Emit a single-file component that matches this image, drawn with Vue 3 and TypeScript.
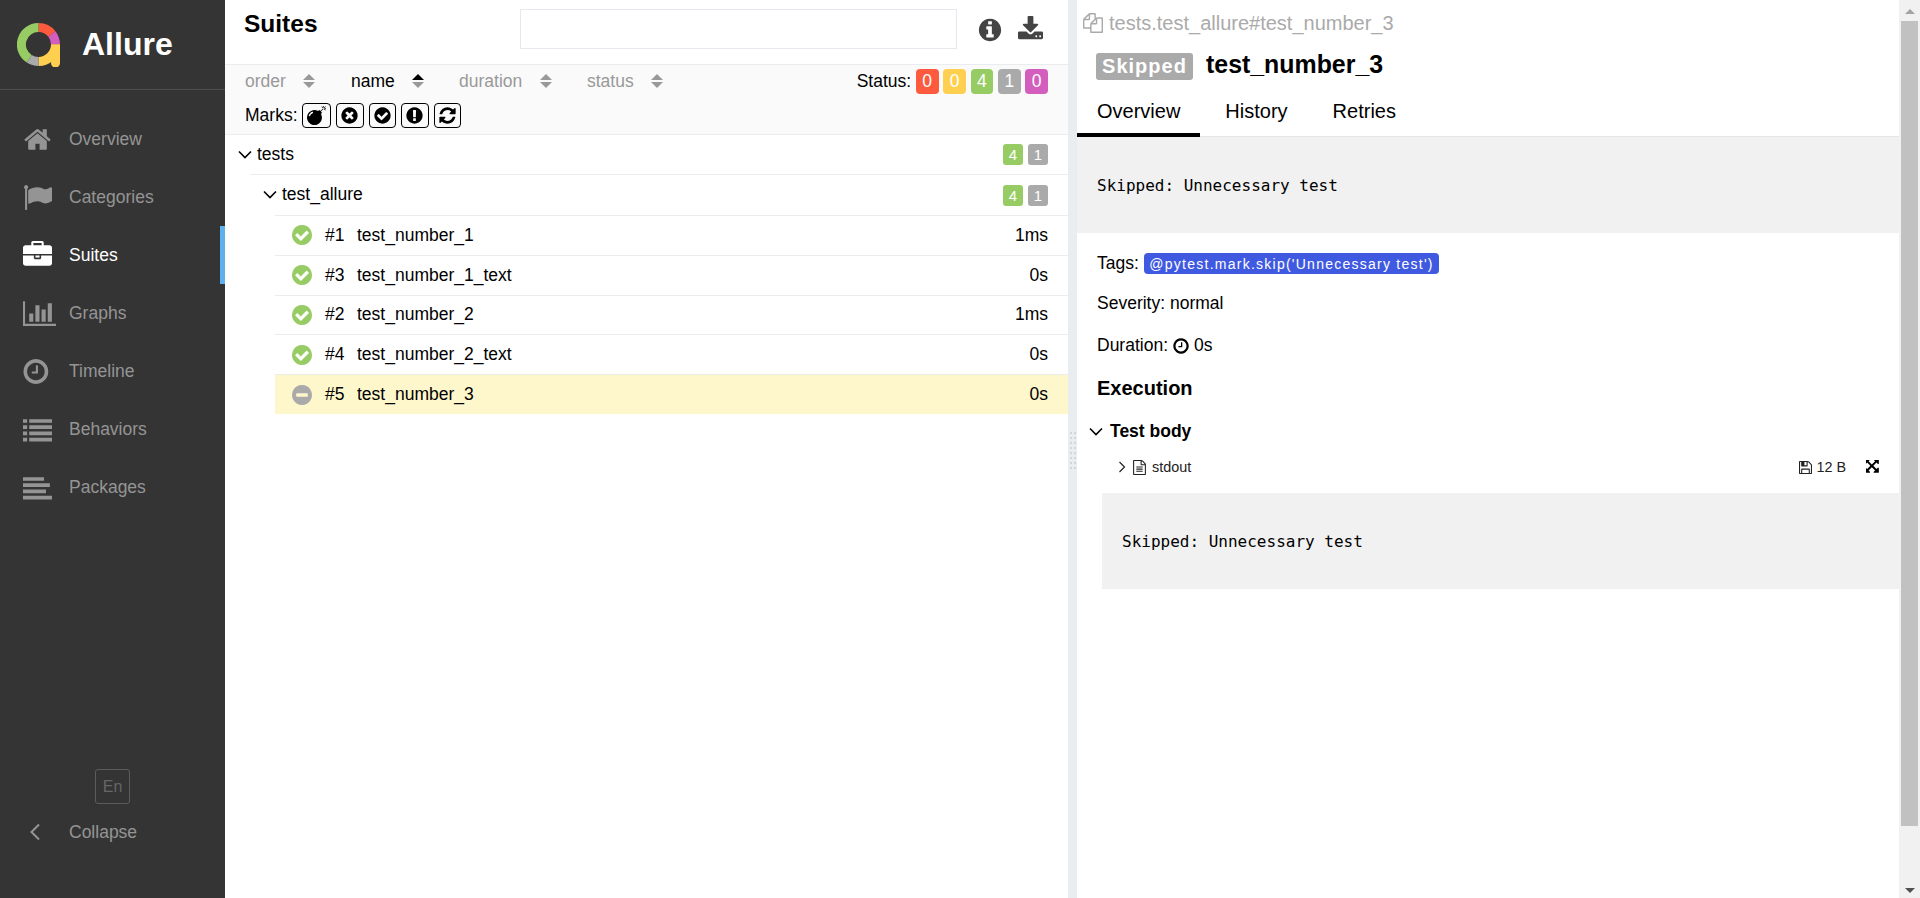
<script setup lang="ts">
// font awesome 4 paths, 1792 grid unless noted
const icons: Record<string, string> = {
  home: "M1472 992v480q0 26-19 45t-45 19h-384v-384h-256v384h-384q-26 0-45-19t-19-45v-480q0-1 .5-3t.5-3l575-474 575 474q1 2 1 6zm223-69l-62 74q-8 9-21 11h-3q-13 0-21-7l-692-577-692 577q-12 8-24 7-13-2-21-11l-62-74q-8-10-7-23.500t11-21.500l719-599q32-26 76-26t76 26l244 204v-195q0-14 9-23t23-9h192q14 0 23 9t9 23v408l219 182q10 8 11 21.500t-7 23.500z",
  flag: "M320 256q0 72-64 110v1266q0 13-9.500 22.500t-22.500 9.500h-64q-13 0-22.500-9.500t-9.500-22.500v-1266q-64-38-64-110 0-53 37.500-90.500t90.500-37.500 90.500 37.500 37.500 90.500zm1472 64v763q0 25-12.500 38.500t-39.500 27.500q-215 116-369 116-61 0-123.500-22t-108.500-48-115.500-48-142.500-22q-192 0-464 146-17 9-33 9-26 0-45-19t-19-45v-742q0-32 31-55 21-14 79-43 236-120 421-120 107 0 200 29t219 88q38 19 88 19 54 0 117.500-21t110-47 88-47 54.500-21q26 0 45 19t19 45z",
  briefcase:
    "M640 256h512v-128h-512v128zm1152 640v480q0 66-47 113t-113 47h-1472q-66 0-113-47t-47-113v-480h672v160q0 26 19 45t45 19h320q26 0 45-19t19-45v-160h672zm-768 0v128h-256v-128h256zm768-480v384h-1792v-384q0-66 47-113t113-47h352v-160q0-40 28-68t68-28h576q40 0 68 28t28 68v160h352q66 0 113 47t47 113z",
  chart:
    "M640 896v512h-256v-512h256zm384-512v1024h-256v-1024h256zm1024 1152v128h-2048v-1536h128v1408h1920zm-640-896v768h-256v-768h256zm384-384v1152h-256v-1152h256z",
  clock:
    "M1024 544v448q0 14-9 23t-23 9h-320q-14 0-23-9t-9-23v-64q0-14 9-23t23-9h224v-352q0-14 9-23t23-9h64q14 0 23 9t9 23zm416 352q0-148-73-273t-198-198-273-73-273 73-198 198-73 273 73 273 198 198 273 73 273-73 198-198 73-273zm224 0q0 209-103 385.500t-279.500 279.500-385.500 103-385.500-103-279.500-279.500-103-385.500 103-385.500 279.500-279.500 385.500-103 385.500 103 279.500 279.500 103 385.500z",
  list: "M0 256h256v230h-256zM0 640h256v230h-256zM0 1024h256v230h-256zM0 1408h256v230h-256zM384 256h1408v230h-1408zM384 640h1408v230h-1408zM384 1024h1408v230h-1408zM384 1408h1408v230h-1408z",
  align:
    "M0 256h1300v230h-1300zM0 640h1660v230h-1660zM0 1024h1420v230h-1420zM0 1408h1792v230h-1792z",
  check:
    "M1412 734q0-28-18-46l-91-90q-19-19-45-19t-45 19l-408 407-226-226q-19-19-45-19t-45 19l-91 90q-18 18-18 46 0 27 18 45l362 362q19 19 45 19 27 0 46-19l543-543q18-18 18-45zm252 162q0 209-103 385.500t-279.500 279.500-385.500 103-385.500-103-279.500-279.500-103-385.500 103-385.500 279.500-279.500 385.500-103 385.500 103 279.500 279.500 103 385.500z",
  minus:
    "M1344 960v-128q0-26-19-45t-45-19h-768q-26 0-45 19t-19 45v128q0 26 19 45t45 19h768q26 0 45-19t19-45zm320-64q0 209-103 385.500t-279.500 279.500-385.500 103-385.500-103-279.500-279.500-103-385.500 103-385.500 279.500-279.500 385.500-103 385.500 103 279.500 279.500 103 385.500z",
  times:
    "M1277 1122q0-26-19-45l-181-181 181-181q19-19 19-45 0-27-19-46l-90-90q-19-19-46-19-26 0-45 19l-181 181-181-181q-19-19-45-19-27 0-46 19l-90 90q-19 19-19 46 0 26 19 45l181 181-181 181q-19 19-19 45 0 27 19 46l90 90q19 19 46 19 26 0 45-19l181-181 181 181q19 19 45 19 27 0 46-19l90-90q19-19 19-46zm387-226q0 209-103 385.500t-279.500 279.500-385.500 103-385.500-103-279.500-279.500-103-385.500 103-385.500 279.500-279.500 385.500-103 385.500 103 279.500 279.500 103 385.500z",
  exclamation:
    "M896 128q209 0 385.500 103t279.500 279.500 103 385.500-103 385.500-279.500 279.500-385.500 103-385.500-103-279.500-279.500-103-385.500 103-385.500 279.500-279.500 385.500-103zm128 1247v-190q0-14-9-23.500t-22-9.500h-192q-13 0-23 10t-10 23v190q0 13 10 23t23 10h192q13 0 22-9.500t9-23.500zm-2-344l18-621q0-12-10-18-10-8-24-8h-220q-14 0-24 8-10 6-10 18l17 621q0 10 10 17.500t24 7.500h185q14 0 23.500-7.500t10.500-17.500z",
  refresh:
    "M1639 1056q0 5-1 7-64 268-268 434.500t-478 166.500q-146 0-282.500-55t-243.500-157l-129 129q-19 19-45 19t-45-19-19-45v-448q0-26 19-45t45-19h448q26 0 45 19t19 45-19 45l-137 137q71 66 161 102t187 36q134 0 250-65t186-179q11-17 53-117 8-23 30-23h192q13 0 22.500 9.500t9.500 22.500zm25-800v448q0 26-19 45t-45 19h-448q-26 0-45-19t-19-45 19-45l138-138q-148-137-349-137-134 0-250 65t-186 179q-11 17-53 117-8 23-30 23h-199q-13 0-22.500-9.500t-9.500-22.500v-7q65-268 270-434.500t480-166.500q146 0 284 55.500t245 156.500l130-129q19-19 45-19t45 19 19 45z",
  bomb: "M571 589q-10-25-34-35t-49 0q-108 44-191 127t-127 191q-10 25 0 49t35 34q13 5 24 5 42 0 60-40 34-84 98.500-148.500t148.500-98.500q25-11 35-35t0-49zm942-356l46 46-244 243 68 68q19 19 19 45.500t-19 45.500l-64 64q89 161 89 343 0 143-55.500 273.500t-150 225-225 150-273.500 55.500-273.500-55.500-225-150-150-225-55.500-273.500 55.500-273.500 150-225 225-150 273.500-55.500q182 0 343 89l64-64q19-19 45.500-19t45.500 19l68 68zm8-56q-10 10-22 10-13 0-23-10l-91-90q-9-10-9-23t9-23q10-9 23-9t23 9l90 91q10 9 10 22.500t-10 22.500zm230 230q-11 9-23 9t-23-9l-90-91q-10-9-10-22.500t10-22.500q9-10 22.500-10t22.500 10l91 90q9 10 9 23t-9 23zm41-183q0 14-9 23t-23 9h-96q-14 0-23-9t-9-23 9-23 23-9h96q14 0 23 9t9 23zm-192-192v96q0 14-9 23t-23 9-23-9-9-23v-96q0-14 9-23t23-9 23 9 9 23zm151 55l-91 90q-10 10-22 10-13 0-23-10-10-9-10-22.500t10-22.500l90-91q10-9 23-9t23 9q9 10 9 23t-9 23z",
  info: "M1152 1376v-160q0-14-9-23t-23-9h-96v-512q0-14-9-23t-23-9h-320q-14 0-23 9t-9 23v160q0 14 9 23t23 9h96v320h-96q-14 0-23 9t-9 23v160q0 14 9 23t23 9h448q14 0 23-9t9-23zm-128-896v-160q0-14-9-23t-23-9h-192q-14 0-23 9t-9 23v160q0 14 9 23t23 9h192q14 0 23-9t9-23zm640 416q0 209-103 385.500t-279.500 279.500-385.500 103-385.500-103-279.500-279.500-103-385.500 103-385.500 279.500-279.500 385.500-103 385.500 103 279.500 279.500 103 385.500z",
  download:
    "M1344 1344q0-26-19-45t-45-19-45 19-19 45 19 45 45 19 45-19 19-45zm256 0q0-26-19-45t-45-19-45 19-19 45 19 45 45 19 45-19 19-45zm128-224v320q0 40-28 68t-68 28h-1472q-40 0-68-28t-28-68v-320q0-40 28-68t68-28h465l135 136q58 56 136 56t136-56l136-136h464q40 0 68 28t28 68zm-325-569q17 41-14 70l-448 448q-18 19-45 19t-45-19l-448-448q-31-29-14-70 17-39 59-39h256v-448q0-26 19-45t45-19h256q26 0 45 19t19 45v448h256q42 0 59 39z",
  files:
    "M1696 384q40 0 68 28t28 68v1216q0 40-28 68t-68 28h-960q-40 0-68-28t-28-68v-288h-544q-40 0-68-28t-28-68v-672q0-40 20-88t48-76l408-408q28-28 76-48t88-20h416q40 0 68 28t28 68v328q68-40 128-40h416zm-544 213l-299 299h299v-299zm-640-384l-299 299h299v-299zm196 647l316-316v-416h-384v416q0 40-28 68t-68 28h-416v640h512v-256q0-40 20-88t48-76zm956 804v-1152h-384v416q0 40-28 68t-68 28h-416v640h896z",
  file: "M1596 380q28 28 48 76t20 88v1152q0 40-28 68t-68 28h-1344q-40 0-68-28t-28-68v-1600q0-40 28-68t68-28h896q40 0 88 20t76 48zm-444-244v376h376q-10-29-22-41l-313-313q-12-12-41-22zm384 1528v-1024h-416q-40 0-68-28t-28-68v-416h-768v1536h1280zm-1024-864q0-14 9-23t23-9h704q14 0 23 9t9 23v64q0 14-9 23t-23 9h-704q-14 0-23-9t-9-23v-64zm736 224q14 0 23 9t9 23v64q0 14-9 23t-23 9h-704q-14 0-23-9t-9-23v-64q0-14 9-23t23-9h704zm0 256q14 0 23 9t9 23v64q0 14-9 23t-23 9h-704q-14 0-23-9t-9-23v-64q0-14 9-23t23-9h704z",
  floppy:
    "M512 1536h768v-384h-768v384zm896 0h128v-896q0-14-10-38.500t-20-34.500l-281-281q-10-10-34-20t-39-10v416q0 40-28 68t-68 28h-576q-40 0-68-28t-28-68v-416h-128v1280h128v-416q0-40 28-68t68-28h832q40 0 68 28t28 68v416zm-384-928v-320q0-13-9.500-22.500t-22.500-9.500h-192q-13 0-22.500 9.500t-9.500 22.500v320q0 13 9.500 22.500t22.500 9.500h192q13 0 22.500-9.500t9.500-22.500zm640 32v928q0 40-28 68t-68 28h-1344q-40 0-68-28t-28-68v-1344q0-40 28-68t68-28h928q40 0 88 20t76 48l280 280q28 28 48 76t20 88z",
  expand:
    "M1283 413l-355 355 355 355 144-144q29-31 70-14 39 17 39 59v448q0 26-19 45t-45 19h-448q-42 0-59-40-17-39 14-69l144-144-355-355-355 355 144 144q31 30 14 69-17 40-59 40h-448q-26 0-45-19t-19-45v-448q0-42 40-59 39-17 69 14l144 144 355-355-355-355-144 144q-19 19-45 19-12 0-24-5-40-17-40-59v-448q0-26 19-45t45-19h448q42 0 59 40 17 39-14 69l-144 144 355 355 355-355-144-144q-31-30-14-69 17-40 59-40h448q26 0 45 19t19 45v448q0 42-39 59-13 5-25 5-26 0-45-19z",
};

const navItems = [
  { label: "Overview", icon: "home", box: "0 0 1792 1792" },
  { label: "Categories", icon: "flag", box: "0 0 1792 1792" },
  { label: "Suites", icon: "briefcase", box: "0 0 1792 1792", active: true },
  { label: "Graphs", icon: "chart", box: "0 0 2048 1792" },
  { label: "Timeline", icon: "clock", box: "100 0 1792 1792" },
  { label: "Behaviors", icon: "list", box: "0 0 1792 1792" },
  { label: "Packages", icon: "align", box: "0 0 1792 1792" },
];

const sorters = [
  { label: "order", width: 106 },
  { label: "name", width: 108, active: true },
  { label: "duration", width: 128 },
  { label: "status", width: 80 },
];

const marks = ["bomb", "times", "check", "exclamation", "refresh"];

const statusCounts = [
  { value: 0, color: "#fd5a3e" },
  { value: 0, color: "#ffd050" },
  { value: 4, color: "#97cc64" },
  { value: 1, color: "#aaaaaa" },
  { value: 0, color: "#d35ebe" },
];

const tests = [
  { order: 1, name: "test_number_1", time: "1ms", icon: "check" },
  { order: 3, name: "test_number_1_text", time: "0s", icon: "check" },
  { order: 2, name: "test_number_2", time: "1ms", icon: "check" },
  { order: 4, name: "test_number_2_text", time: "0s", icon: "check" },
  { order: 5, name: "test_number_3", time: "0s", icon: "minus", selected: true },
];

const tabs = ["Overview", "History", "Retries"];
const message = "Skipped: Unnecessary test";
const handleDots = 16;
</script>

<template>
  <div class="app">
    <aside class="side">
      <div class="brand">
        <svg class="logo" viewBox="0 0 44 44" width="44" height="44">
          <g fill="none" stroke-width="9">
            <path d="M21.5 4.5A17 17 0 0 1 34.900 11" stroke="#fd5a3e" />
            <path d="M34.900 11A17 17 0 0 1 38.500 21.500" stroke="#d35ebe" />
            <path d="M38.500 21.500A17 17 0 0 1 21.500 38.500" stroke="#ffd050" />
            <path d="M21.500 38.500A17 17 0 0 1 12.200 35.800" stroke="#aaaaaa" />
            <path d="M12.200 35.800A17 17 0 0 1 21.500 4.500" stroke="#97cc64" />
          </g>
          <path d="M34 21.500h9v18.500a4.500 4.500 0 0 1-9 0z" fill="#ffd050" />
        </svg>
        <span class="brand-name">Allure</span>
      </div>
      <nav class="nav">
        <a
          v-for="item in navItems"
          :key="item.label"
          class="nav-item"
          :class="{ active: item.active }"
        >
          <span class="nav-icon">
            <svg :viewBox="item.box" height="29" :width="item.icon === 'chart' ? 33 : 29">
              <path :d="icons[item.icon]" fill="currentColor" />
            </svg>
          </span>
          <span>{{ item.label }}</span>
        </a>
      </nav>
      <div class="side-foot">
        <div class="lang">En</div>
        <a class="collapse">
          <span class="nav-icon">
            <svg width="12" height="18" viewBox="0 0 12 18" class="collapse-arrow">
              <path d="M10 1.500L2.500 9l7.500 7.500" fill="none" stroke="currentColor" stroke-width="2" />
            </svg>
          </span>
          <span>Collapse</span>
        </a>
      </div>
    </aside>

    <main class="tree-pane">
      <header class="tree-head">
        <h2>Suites</h2>
        <input class="search" type="text" />
        <svg class="head-icon info" viewBox="0 0 1792 1792" width="26" height="26">
          <path :d="icons.info" fill="currentColor" />
        </svg>
        <svg class="head-icon" viewBox="0 0 1792 1792" width="27" height="27">
          <path :d="icons.download" fill="currentColor" />
        </svg>
      </header>

      <div class="filters">
        <div class="filter-row">
          <div
            v-for="s in sorters"
            :key="s.label"
            class="sorter"
            :class="{ on: s.active }"
            :style="{ width: s.width + 'px' }"
          >
            <span class="sorter-name">{{ s.label }}</span>
            <span class="sort-arrows" :class="{ on: s.active }">
              <i class="up"></i>
              <i class="down"></i>
            </span>
          </div>
          <div class="status">
            <span>Status:</span>
            <span
              v-for="(c, i) in statusCounts"
              :key="i"
              class="count"
              :style="{ background: c.color }"
              >{{ c.value }}</span
            >
          </div>
        </div>
        <div class="marks">
          <span>Marks:</span>
          <button v-for="m in marks" :key="m" class="mark" :class="{ wide: m === 'bomb' }">
            <svg viewBox="0 0 1792 1792" width="19" height="19">
              <path :d="icons[m]" fill="currentColor" />
            </svg>
          </button>
        </div>
      </div>

      <div class="tree">
        <div class="group lvl1">
          <svg class="chev" width="14" height="9" viewBox="0 0 14 9">
            <path d="M1 1.500l6 6 6-6" fill="none" stroke="#000" stroke-width="1.600" />
          </svg>
          <span class="group-name">tests</span>
          <span class="small-count green">4</span>
          <span class="small-count gray">1</span>
        </div>
        <div class="group lvl2">
          <svg class="chev" width="14" height="9" viewBox="0 0 14 9">
            <path d="M1 1.500l6 6 6-6" fill="none" stroke="#000" stroke-width="1.600" />
          </svg>
          <span class="group-name">test_allure</span>
          <span class="small-count green">4</span>
          <span class="small-count gray">1</span>
        </div>
        <div v-for="t in tests" :key="t.order" class="test" :class="{ selected: t.selected }">
          <svg
            class="test-icon"
            :class="t.icon"
            viewBox="128 128 1536 1536"
            width="20"
            height="20"
          >
            <path :d="icons[t.icon]" fill="currentColor" />
          </svg>
          <span class="test-order">#{{ t.order }}</span>
          <span class="test-name">{{ t.name }}</span>
          <span class="test-time">{{ t.time }}</span>
        </div>
      </div>
    </main>

    <div class="divider">
      <div class="handle">
        <i v-for="n in handleDots" :key="n"></i>
      </div>
    </div>

    <section class="detail">
      <div class="crumb">
        <svg viewBox="0 0 1792 1792" width="20" height="20">
          <path :d="icons.files" fill="currentColor" />
        </svg>
        <span>tests.test_allure#test_number_3</span>
      </div>
      <div class="title-row">
        <span class="skip-label">Skipped</span>
        <h2>test_number_3</h2>
      </div>
      <div class="tabs">
        <a v-for="(tab, i) in tabs" :key="tab" class="tab" :class="{ current: i === 0 }">{{ tab }}</a>
      </div>
      <pre class="message">{{ message }}</pre>

      <div class="meta tags">
        Tags:
        <span class="tag">@pytest.mark.skip('Unnecessary test')</span>
      </div>
      <div class="meta severity">Severity: normal</div>
      <div class="meta duration">
        Duration:
        <svg viewBox="0 0 1792 1792" width="18" height="18">
          <path :d="icons.clock" fill="currentColor" />
        </svg>
        0s
      </div>

      <h3 class="exec">Execution</h3>
      <div class="step">
        <svg width="14" height="9" viewBox="0 0 14 9">
          <path d="M1 1.500l6 6 6-6" fill="none" stroke="#000" stroke-width="1.600" />
        </svg>
        <b>Test body</b>
      </div>
      <div class="attachment">
        <svg width="8" height="12" viewBox="0 0 8 12">
          <path d="M1.500 1l5 5-5 5" fill="none" stroke="#222" stroke-width="1.200" />
        </svg>
        <svg class="att-file" viewBox="128 0 1536 1792" width="13" height="15">
          <path :d="icons.file" fill="currentColor" />
        </svg>
        <span class="att-name">stdout</span>
        <svg class="att-save" viewBox="128 128 1536 1536" width="13" height="13">
          <path :d="icons.floppy" fill="currentColor" />
        </svg>
        <span class="att-size">12 B</span>
        <svg class="att-expand" viewBox="128 128 1536 1536" width="14" height="14">
          <path :d="icons.expand" fill="#000" />
        </svg>
      </div>
      <pre class="message att-body">{{ message }}</pre>
    </section>

    <div class="scrollbar">
      <i class="sb-up"></i>
      <div class="sb-thumb"></div>
      <i class="sb-down"></i>
    </div>
  </div>
</template>

<style>
html,
body {
  margin: 0;
  height: 100%;
  overflow: hidden;
}
</style>

<style scoped>
.app {
  display: flex;
  height: 898px;
  font-family: "Liberation Sans", Arial, sans-serif;
  font-size: 17.5px;
  color: #000;
  background: #fff;
  overflow: hidden;
}

/* sidebar */
.side {
  width: 225px;
  flex: none;
  display: flex;
  flex-direction: column;
  background: #343434;
  color: #949494;
}
.brand {
  height: 89px;
  flex: none;
  display: flex;
  align-items: center;
  padding-left: 17px;
  border-bottom: 1px solid #4c4c4c;
}
.logo {
  margin-top: 1px;
}
.brand-name {
  margin-left: 21px;
  font-size: 32px;
  font-weight: bold;
  color: #fff;
}
.nav {
  padding-top: 20px;
}
.nav-item,
.collapse {
  display: flex;
  align-items: center;
  height: 58px;
  box-sizing: border-box;
  color: #949494;
}
.nav-item.active {
  color: #fff;
  border-right: 5px solid #5eb0ee;
}
.nav-icon {
  width: 69px;
  flex: none;
  display: flex;
  padding-left: 23px;
  box-sizing: border-box;
}
.side-foot {
  margin-top: auto;
  padding-bottom: 46px;
}
.lang {
  width: 35px;
  height: 35px;
  box-sizing: border-box;
  margin-left: 95px;
  display: flex;
  align-items: center;
  justify-content: center;
  border: 1px solid #5c5c5c;
  border-radius: 3px;
  color: #666;
  font-size: 16px;
}
.collapse {
  height: 40px;
  margin-top: 8px;
}
.collapse-arrow {
  margin-left: 6px;
}

/* tree pane */
.tree-pane {
  width: 843px;
  flex: none;
  display: flex;
  flex-direction: column;
}
.tree-head {
  height: 64px;
  flex: none;
  display: flex;
  align-items: flex-start;
  padding-left: 19px;
  box-sizing: border-box;
}
.tree-head h2 {
  margin: 8px 0 0;
  width: 276px;
  font-size: 24.5px;
  line-height: 32px;
}
.search {
  width: 437px;
  height: 40px;
  margin-top: 9px;
  box-sizing: border-box;
  border: 1px solid #e5e8ec;
  outline: 0;
  padding: 0;
}
.head-icon {
  margin-top: 16px;
  color: #444;
}
.head-icon.info {
  margin-left: 20px;
  margin-right: 14px;
  margin-top: 17px;
}
.filters {
  height: 71px;
  flex: none;
  box-sizing: border-box;
  background: #fafafa;
  border-top: 1px solid #e9edf0;
  border-bottom: 1px solid #e9edf0;
  padding: 0 20px;
}
.filter-row {
  height: 32px;
  display: flex;
  align-items: center;
}
.sorter {
  display: flex;
  align-items: center;
  color: #999;
  box-sizing: border-box;
}
.sorter-name {
  min-width: 58px;
}
.sorter.on {
  color: #000;
}
.sorter:nth-child(2) .sorter-name {
  min-width: 61px;
}
.sorter:nth-child(3) .sorter-name {
  min-width: 81px;
}
.sorter:nth-child(4) .sorter-name {
  min-width: 64px;
}
.sort-arrows {
  display: flex;
  flex-direction: column;
  gap: 2px;
  width: 12px;
}
.sort-arrows i {
  display: block;
  width: 0;
  height: 0;
  border-left: 6px solid transparent;
  border-right: 6px solid transparent;
}
.sort-arrows .up {
  border-bottom: 6px solid #999;
}
.sort-arrows .down {
  border-top: 6px solid #999;
}
.sort-arrows.on .up {
  border-bottom-color: #000;
}
.status {
  margin-left: auto;
  display: flex;
  align-items: center;
  gap: 4.7px;
}
.count {
  width: 22.7px;
  height: 25px;
  display: flex;
  align-items: center;
  justify-content: center;
  border-radius: 4px;
  color: #fff;
}
.marks {
  display: flex;
  align-items: center;
  gap: 5px;
  margin-top: 6px;
  height: 25px;
}
.marks span {
  margin-right: -1px;
}
.mark {
  width: 27.5px;
  height: 25px;
  padding: 0;
  display: flex;
  align-items: center;
  justify-content: center;
  background: #fafafa;
  border: 1px solid #000;
  border-radius: 4px;
  color: #000;
}
.mark.wide {
  width: 29.5px;
}
.tree {
  flex: 1;
}
.group {
  display: flex;
  align-items: center;
  padding-right: 20px;
  box-sizing: border-box;
}
.lvl1 {
  height: 39px;
  padding-left: 13px;
}
.lvl2 {
  height: 41px;
  margin-left: 25px;
  padding-left: 13px;
  border-top: 1px solid #ececec;
}
.lvl2 .chev,
.lvl2 .group-name {
  margin-bottom: 2px;
}
.group-name {
  margin-left: 5px;
  margin-right: auto;
}
.small-count {
  width: 20px;
  height: 21px;
  margin-left: 5px;
  display: flex;
  align-items: center;
  justify-content: center;
  border-radius: 3px;
  font-size: 15px;
  color: #fff;
}
.small-count.green {
  background: #97cc64;
}
.small-count.gray {
  background: #aaa;
}
.test {
  height: 39.8px;
  margin-left: 50px;
  padding: 0 20px 0 17px;
  display: flex;
  align-items: center;
  box-sizing: border-box;
  border-top: 1px solid #ececec;
}
.test.selected {
  background: #fff7cc;
}
.test-icon {
  flex: none;
}
.test-icon.check {
  color: #97cc64;
}
.test-icon.minus {
  color: #aaa;
}
.test-order {
  width: 32px;
  margin-left: 13px;
}
.test-time {
  margin-left: auto;
}

/* divider */
.divider {
  width: 9px;
  flex: none;
  background: #e9edf0;
  display: flex;
  align-items: flex-start;
  justify-content: center;
  padding-top: 432px;
  box-sizing: border-box;
}
.handle {
  display: grid;
  grid-template-columns: 2px 2px;
  gap: 3px 2px;
}
.handle i {
  width: 2px;
  height: 2px;
  background: #d4d6d8;
}

/* detail */
.detail {
  width: 822px;
  flex: none;
  box-sizing: border-box;
}
.crumb {
  height: 46px;
  padding-left: 6px;
  display: flex;
  align-items: center;
  gap: 6px;
  color: #aaa;
  font-size: 20px;
}
.title-row {
  height: 34px;
  margin-top: 1px;
  padding-left: 19px;
  display: flex;
  align-items: center;
}
.title-row h2 {
  margin: 0 0 0 13px;
  font-size: 24.9px;
}
.skip-label {
  width: 97px;
  height: 27px;
  margin-top: 4px;
  display: flex;
  align-items: center;
  justify-content: center;
  background: #aaa;
  border-radius: 3px;
  color: #fff;
  font-size: 20px;
  font-weight: bold;
  letter-spacing: 1px;
}
.tabs {
  height: 56px;
  box-sizing: border-box;
  display: flex;
  gap: 5px;
  border-bottom: 1px solid #e5e5e5;
}
.tab {
  height: 56px;
  box-sizing: border-box;
  padding: 17px 20px 0;
  font-size: 20px;
  line-height: 26px;
  color: #000;
}
.tab.current {
  border-bottom: 4px solid #000;
}
.message {
  margin: 0;
  height: 96px;
  padding: 0 20px;
  box-sizing: border-box;
  display: flex;
  align-items: center;
  background: #f1f1f1;
  font-family: "DejaVu Sans Mono", "Liberation Mono", monospace;
  font-size: 16px;
}
.meta {
  padding-left: 20px;
  display: flex;
  align-items: center;
  gap: 5px;
}
.tags {
  margin-top: 20px;
  height: 21px;
}
.tag {
  height: 21px;
  padding: 0 5.5px;
  display: flex;
  align-items: center;
  background: #3f5ae0;
  border-radius: 4px;
  color: #fff;
  font-size: 14px;
  letter-spacing: 1.25px;
}
.severity {
  margin-top: 19px;
  height: 21px;
}
.duration {
  margin-top: 21px;
  height: 21px;
  gap: 4px;
}
.exec {
  margin: 19px 0 0 20px;
  font-size: 20px;
  line-height: 26px;
}
.step {
  margin-top: 17px;
  height: 26px;
  padding-left: 12px;
  display: flex;
  align-items: center;
  gap: 7px;
}
.attachment {
  height: 44px;
  margin-top: 1px;
  padding: 0 19px 0 41px;
  display: flex;
  align-items: center;
  font-size: 14.4px;
  color: #222;
}
.att-file {
  margin-left: 7px;
}
.att-name {
  margin-left: 6px;
  margin-right: auto;
}
.att-size {
  margin-left: 4px;
}
.att-expand {
  margin-left: 20px;
}
.att-body {
  margin-left: 25px;
  margin-top: 4px;
  height: 96px;
}

/* scrollbar */
.scrollbar {
  width: 21px;
  flex: none;
  background: #f1f1f1;
  display: flex;
  flex-direction: column;
  align-items: center;
}
.sb-thumb {
  width: 17px;
  height: 805px;
  margin-top: 7px;
  background: #c1c1c1;
}
.sb-up,
.sb-down {
  width: 0;
  height: 0;
  border-left: 5px solid transparent;
  border-right: 5px solid transparent;
}
.sb-up {
  margin-top: 9px;
  border-bottom: 5px solid #a3a3a3;
}
.sb-down {
  margin-top: 62px;
  border-top: 5px solid #505050;
}
</style>
